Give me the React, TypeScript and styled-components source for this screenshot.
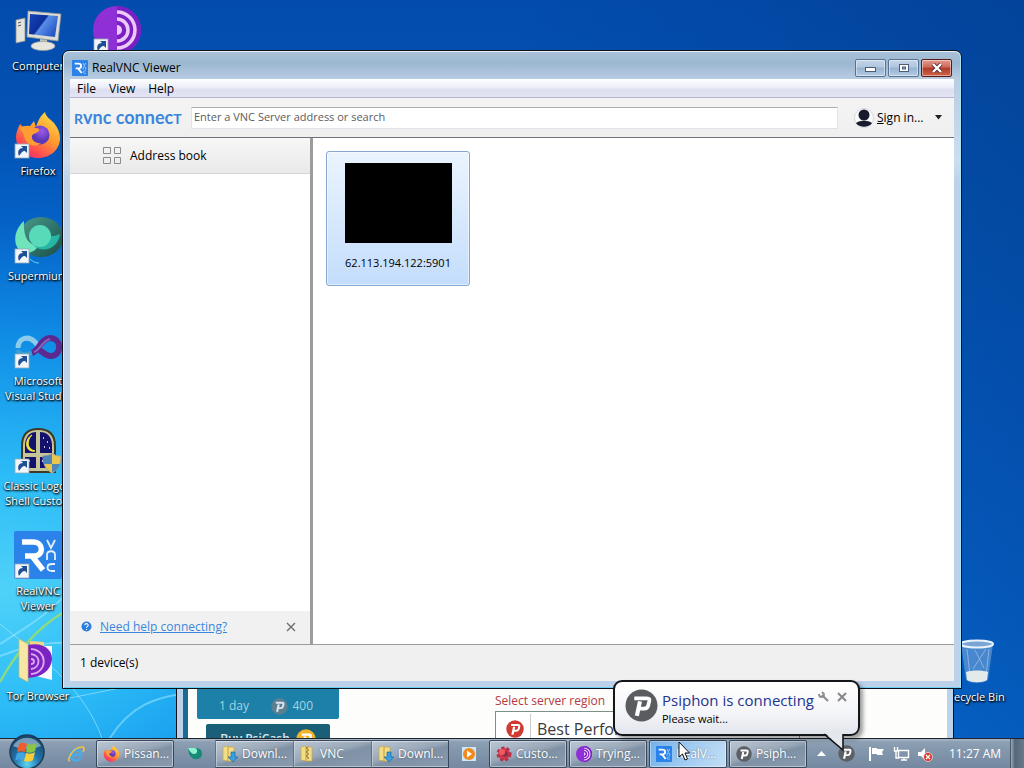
import React from 'react';
import styled, { createGlobalStyle } from 'styled-components';

const GlobalStyle = createGlobalStyle`
  * { box-sizing: border-box; }
  body { margin: 0; font-family: 'Open Sans', 'Noto Sans', sans-serif; font-size: 12px; line-height: 16px; color: #000; }
  button, input { font: inherit; color: inherit; margin: 0; }
  button { padding: 0; border: 0; background: none; text-align: left; }
  svg { display: block; flex: none; }
`;

const Screen = styled.div`
  display: flex;
  flex-direction: column;
  height: 100vh;
  overflow: hidden;
`;

const Desktop = styled.main`
  position: relative;
  flex: 1;
  min-height: 0;
  background:
    radial-gradient(ellipse 60% 62% at 0% 80%, #4fd2f8 0%, #2cbcf7 25%, rgba(18, 150, 236, 0.85) 55%, rgba(6, 110, 215, 0.5) 80%, rgba(4, 90, 200, 0) 100%),
    linear-gradient(90deg, rgba(4, 60, 150, 0) 50%, rgba(2, 50, 120, 0.35) 100%),
    linear-gradient(180deg, #034cad 0%, #0456b8 30%, #0560cc 60%, #0672e0 100%);
`;

const Wallpaper = styled.svg`
  position: absolute;
  left: 0;
  bottom: 0;
`;

const IconColumns = styled.div`
  position: absolute;
  inset: 0;
  display: flex;
  gap: 3px;
`;

const IconColumn = styled.div`
  display: flex;
  flex-direction: column;
  width: 76px;
`;

const DesktopIcon = styled.button`
  display: flex;
  flex-direction: column;
  align-items: center;
  gap: 4px;
  width: 76px;
  height: 105px;
  padding-top: 6px;
  color: #fff;
  font-size: 11px;
  line-height: 15px;
  text-align: center;
  white-space: pre;
  text-shadow: 1px 1px 2px #000, 0 1px 2px #000;
`;

const BinSpot = styled.div`
  position: absolute;
  right: 10px;
  bottom: 2px;
  width: 76px;
`;

const Glass = styled.section`
  position: absolute;
  display: flex;
  flex-direction: column;
  border: 1px solid #0b1016;
  background: #bcd2ea;
`;

const ViewerWindow = styled(Glass)`
  inset: 50px 62px 49px;
  padding: 0 7px 7px;
  border-radius: 7px 7px 0 0;
  background:
    linear-gradient(180deg, #aac2d9 0, #9bb7d1 12px, #b8cde2 28px, #cbdff2 110px, #bcd2ea 130px);
  box-shadow: inset 0 1px 0 #e4f0fa, inset 1px 0 0 #dceaf6, inset -1px 0 0 #a8e4f8, inset 0 -1px 0 #6fd0f2;
`;

const TitleBar = styled.header`
  display: flex;
  align-items: center;
  gap: 4px;
  height: 28px;
  padding: 5px 2px 0;
`;

const Title = styled.h1`
  flex: 1;
  margin: 0;
  font-size: 12px;
  font-weight: 400;
`;

const CaptionButtons = styled.div`
  display: flex;
  gap: 2px;
`;

const CaptionButton = styled.button<{ $close?: boolean }>`
  display: grid;
  place-items: center;
  width: 31px;
  height: 18px;
  border: 1px solid ${p => (p.$close ? '#5a1a18' : '#5a7290')};
  border-radius: 2px;
  background: ${p => (p.$close
    ? 'linear-gradient(#e09a8c 0, #cf6a58 45%, #b03a28 50%, #cf6448 100%)'
    : 'linear-gradient(#c3d5e8 0, #b0c6de 45%, #96b2d0 50%, #b4cce4 100%)')};
  box-shadow: inset 0 0 0 1px rgba(255, 255, 255, 0.45);
`;

const Client = styled.div`
  display: flex;
  flex: 1;
  flex-direction: column;
  min-height: 0;
  background: #fff;
`;

const MenuBar = styled.nav`
  display: flex;
  gap: 13px;
  height: 19px;
  padding: 2px 7px 0;
  border-bottom: 1px solid #b4b6cc;
  background: linear-gradient(#fff, #eceef8 45%, #dcdff0 60%, #e4e4f4);
`;

const Toolbar = styled.div`
  display: flex;
  align-items: center;
  height: 40px;
  padding: 0 11px 0 4px;
  border-bottom: 1px solid #70747a;
  background: linear-gradient(#f4f4f4, #efefef);
`;

const Wordmark = styled.div`
  width: 117px;
  color: #3a86dc;
  font-family: Lato, sans-serif;
  font-size: 18px;
  font-weight: 700;
  line-height: 24px;
  white-space: pre;
`;

const Cap = styled.span`
  font-size: 14px;
`;

const AddressInput = styled.input`
  flex: 1;
  min-width: 0;
  height: 22px;
  margin-right: 16px;
  padding: 0 2px 2px;
  border: 1px solid #e2e3ea;
  border-top-color: #abadb3;
  background: #fff;
  font-size: 11px;
  outline: 0;
  &::placeholder { color: #5c5c5c; opacity: 1; }
`;

const SignIn = styled.button`
  display: flex;
  align-items: center;
  width: 89px;
  gap: 3px;
`;

const SignInLabel = styled.span`
  flex: 1;
`;

const Panes = styled.div`
  display: flex;
  flex: 1;
  min-height: 0;
`;

const Sidebar = styled.aside`
  display: flex;
  flex-direction: column;
  justify-content: space-between;
  width: 243px;
  border-right: 3px solid #9c9c9c;
`;

const SideItem = styled.button`
  display: flex;
  align-items: center;
  gap: 8px;
  height: 36px;
  padding-left: 33px;
  border-bottom: 1px solid #d6d6d6;
  background: linear-gradient(#f7f7f7, #e9e9e9);
`;

const HelpBar = styled.div`
  display: flex;
  align-items: center;
  gap: 8px;
  height: 33px;
  padding: 0 14px 2px 11px;
  background: #f1f1f1;
`;

const HelpLink = styled.a`
  flex: 1;
  color: #3a86dc;
`;

const DeviceArea = styled.div`
  flex: 1;
  padding: 13px;
`;

const DeviceTile = styled.button`
  display: flex;
  flex-direction: column;
  align-items: center;
  gap: 12px;
  width: 144px;
  height: 135px;
  padding-top: 11px;
  border: 1px solid #84a8cf;
  border-radius: 3px;
  background: linear-gradient(#ebf4fe, #c4ddfc);
  box-shadow: inset 0 0 0 1px rgba(255, 255, 255, 0.5);
  font-size: 11px;
`;

const Thumb = styled.span`
  width: 107px;
  height: 80px;
  background: #000;
`;

const StatusBar = styled.footer`
  height: 37px;
  padding: 10px;
  border-top: 1px solid #9c9c9c;
  background: #f0f0f0;
`;

const PsiphonWindow = styled(Glass)`
  left: 176px;
  right: 70px;
  bottom: 0;
  height: 80px;
  padding: 0 6px;
  border-bottom: 0;
`;

const PsiphonBody = styled.div`
  display: flex;
  flex: 1;
  gap: 156px;
  min-height: 0;
  padding: 20px 9px 0;
  border-left: 5px solid #1a6b94;
  background: #fdfdfb;
  overflow: hidden;
`;

const CashPanel = styled.div`
  display: flex;
  flex: none;
  flex-direction: column;
  align-items: center;
  gap: 5px;
  width: 142px;
`;

const PriceButton = styled.button`
  display: flex;
  flex: none;
  align-items: center;
  justify-content: space-between;
  width: 100%;
  height: 40px;
  padding: 14px 26px 0 22px;
  border-radius: 2px;
  background: #1d80a8;
  color: #a3d3e4;
`;

const Coins = styled.span`
  display: flex;
  align-items: center;
  gap: 4px;
`;

const BuyButton = styled.button`
  display: flex;
  flex: none;
  align-items: center;
  justify-content: center;
  gap: 6px;
  width: 124px;
  height: 30px;
  border-radius: 2px;
  background: #1b5e78;
  color: #d6e8ee;
  font-weight: 600;
`;

const RegionPanel = styled.div`
  width: 305px;
  padding-top: 14px;
  color: #b23a44;
`;

const RegionButton = styled.button`
  display: flex;
  align-items: center;
  width: 100%;
  height: 36px;
  margin-top: 2px;
  padding-left: 10px;
  border: 1px solid #7d9088;
  background: #fff;
  color: #3c3c3c;
  font-size: 16px;
`;

const RegionName = styled.span`
  margin-left: 6px;
  padding-left: 6px;
  border-left: 1px solid #ccc;
  line-height: 30px;
`;

const Taskbar = styled.footer`
  position: relative;
  display: flex;
  align-items: center;
  height: 30px;
  border-top: 1px solid #1c242e;
  background: linear-gradient(#a9b8c8 0, #8c9fb3 3px, #8094aa 50%, #7489a1 100%);
  color: #fff;
`;

const StartButton = styled.button`
  width: 56px;
  padding-left: 8px;
  margin-top: -4px;
`;

const Pinned = styled.button<{ $w: number }>`
  display: grid;
  place-items: center;
  width: ${p => p.$w}px;
  height: 28px;
`;

const TaskGroup = styled.div<{ $gap: number }>`
  display: flex;
  gap: ${p => p.$gap}px;
`;

const TaskButton = styled.button<{ $active?: boolean }>`
  display: flex;
  align-items: center;
  gap: 4px;
  width: 78px;
  height: 28px;
  padding-left: 6px;
  border: 1px solid #38485a;
  border-radius: 2px;
  background: ${p => (p.$active
    ? 'linear-gradient(115deg, #74b2ea 0, #a4cdf2 55%, #c2def5 100%)'
    : 'linear-gradient(165deg, #bcc7d4 0, #98a7b8 45%, #7f91a5 55%, #8a9bae 100%)')};
  box-shadow: inset 0 0 0 1px rgba(255, 255, 255, 0.4);
  white-space: nowrap;
  text-shadow: 0 0 2px rgba(40, 60, 80, 0.6);
`;

const JoinedTask = styled(TaskButton)`
  border-width: 1px 0 1px 1px;
  border-left-color: rgba(56, 72, 90, 0.45);
  border-radius: 0;
  box-shadow: inset 0 1px 0 rgba(255, 255, 255, 0.45), inset 0 -1px 0 rgba(255, 255, 255, 0.4), inset 1px 0 0 rgba(255, 255, 255, 0.3);
  &:last-child { border-right-width: 1px; }
`;

const Tray = styled.div`
  display: flex;
  align-items: center;
  gap: 7px;
  margin-left: auto;
  height: 100%;
`;

const TrayOverflow = styled.div`
  display: flex;
  align-items: center;
  gap: 12px;
  margin-right: 6px;
`;

const Clock = styled.time`
  width: 70px;
  padding-left: 9px;
  white-space: nowrap;
`;

const ShowDesktop = styled.button`
  width: 14px;
  height: 29px;
  margin-left: -7px;
  border-left: 1px solid #4a5a6c;
  background: linear-gradient(90deg, #9aa9b8, #54667a 30%, #67798c);
`;

const Balloon = styled.aside`
  position: absolute;
  right: 164px;
  bottom: 32px;
  display: flex;
  align-items: flex-start;
  gap: 4px;
  width: 247px;
  height: 56px;
  padding: 7px 12px 0 10px;
  border: 2px solid #14161a;
  border-radius: 9px;
  background: linear-gradient(#fff, #f4f5f8 60%, #e2e5ec);
  box-shadow: 3px 3px 4px rgba(0, 0, 0, 0.4);
  color: #000;
`;

const BalloonText = styled.div`
  flex: 1;
  font-size: 11px;
  white-space: nowrap;
`;

const BalloonTitle = styled.h2`
  margin: 0;
  color: #24338f;
  font-size: 15px;
  font-weight: 400;
  line-height: 22px;
`;

const BalloonTools = styled.div`
  display: flex;
  gap: 8px;
  padding-top: 2px;
`;

const Tail = styled.svg`
  position: absolute;
  right: 12px;
  top: 51px;
`;

const Pointer = styled.svg`
  position: absolute;
  left: 678px;
  bottom: 7px;
`;

const ShortcutArrow = () => (
  <g>
    <rect x="1" y="33" width="14" height="14" fill="#f2f6fa" stroke="#9aa8b6" strokeWidth=".8" />
    <path d="M5 45c-2-5 0-8 4-8l-2-2h6v7l-2-2c-3 0-4 2-6 5z" fill="#1f4f94" />
  </g>
);

const PsiphonMark = ({ size, bg, fg = '#fff' }: { size: number; bg: string; fg?: string }) => (
  <svg width={size} height={size} viewBox="0 0 32 32">
    <circle cx="16" cy="16" r="15.5" fill={bg} />
    <path d="M9 9h12c3 0 3 1 2.500 3l-1 4c-.5 2-1.500 3-4 3h-5" fill="none" stroke={fg} strokeWidth="3.600" />
    <path d="M14.500 12l-3 14" fill="none" stroke={fg} strokeWidth="4" />
  </svg>
);

const VncMark = ({ size }: { size: number }) => (
  <svg width={size} height={size} viewBox="0 0 48 48">
    <rect width="48" height="48" rx="2" fill="#2b83ea" />
    <path d="M8 11h11c11 0 11 14 1 14h-9M18 25l11 14" fill="none" stroke="#fff" strokeWidth="5.500" />
    <path d="M33 9l4 8 4-8M33 29v-5c0-5 8-5 8 0v5M41 33h-3c-6 0-6 7 0 7h3" fill="none" stroke="#e2efff" strokeWidth="1.800" />
  </svg>
);

const FirefoxShape = () => (
  <g>
    <defs>
      <linearGradient id="fx" x1=".85" y1="0" x2=".2" y2="1">
        <stop offset="0" stopColor="#ffe04a" /><stop offset=".45" stopColor="#ff9a2e" /><stop offset=".8" stopColor="#ff4a52" /><stop offset="1" stopColor="#e8267a" />
      </linearGradient>
      <radialGradient id="fxg" cx=".6" cy=".3"><stop offset="0" stopColor="#a05ae8" /><stop offset="1" stopColor="#5a38b8" /></radialGradient>
    </defs>
    <path d="M6 13l4 4c2-2 4-2 6-2l4-5 2 6c2-7 5-12 9-15 1 5 5 7 9 11 4 5 6 10 6 15 0 11-9 20-22 20S2 37 2 26c0-5 2-9 4-13z" fill="url(#fx)" />
    <circle cx="26" cy="24" r="9.500" fill="url(#fxg)" />
    <path d="M5 17c5-3 13-3 16 0 3 0 5 1 4 3-3 3-6 2-7 5-1 4 4 8 9 7-8 6-16 0-17-7-1-4-3-6-5-8z" fill="#ff9d35" />
  </g>
);

const TorShape = () => (
  <g>
    <circle cx="24" cy="24" r="24" fill="#8f2fd6" />
    <path d="M24 0a24 24 0 0 1 0 48z" fill="#7a1fc4" />
    <path d="M24 6a18 18 0 0 1 0 36M24 13a11 11 0 0 1 0 22" fill="none" stroke="#ecc9fb" strokeWidth="3.500" />
    <path d="M24 19a5 5 0 0 1 0 10z" fill="#ecc9fb" />
  </g>
);

const SupermiumShape = () => (
  <g>
    <defs><linearGradient id="sm" x2="1" y2="1"><stop offset="0" stopColor="#4d9a88" /><stop offset=".6" stopColor="#2a6e66" /><stop offset="1" stopColor="#1c4a3e" /></linearGradient></defs>
    <ellipse cx="27" cy="21" rx="22" ry="20" fill="url(#sm)" />
    <path d="M10 5C-1 14-2 32 9 36c9 2 13-2 15-6-10-1-15-9-14-25z" fill="#6fe3ba" />
    <path d="M20 30c10 8 24 2 26-12-6 3-14 3-18-2z" fill="#27b5a5" />
    <circle cx="26" cy="20" r="11" fill="#58d9b8" />
    <path d="M16 43c3 3 6 4 9 4" stroke="#5ad9ee" fill="none" />
  </g>
);

const FolderIcon = ({ zip }: { zip?: boolean }) => (
  <svg width="16" height="18" viewBox="0 0 16 18">
    <path d="M1 2l5-1v15l-5-1zM6 2h6v14H6z" fill="#f2dc84" stroke="#c8a640" strokeWidth=".7" />
    {zip
      ? <path d="M6 3h2M7 5h2M6 7h2M7 9h2M6 11h2M7 13h2" stroke="#6a5530" />
      : <path d="M9 7h4v5h3l-5 5-5-5h3z" fill="#3a9fe0" stroke="#1a6aa8" strokeWidth=".7" />}
  </svg>
);

const ComputerIcon = () => (
  <svg width="48" height="48" viewBox="0 0 48 48">
    <defs><linearGradient id="scr" x2="1" y2=".6"><stop offset="0" stopColor="#1644b8" /><stop offset=".5" stopColor="#0b2f9c" /><stop offset=".55" stopColor="#5a8ee8" /><stop offset="1" stopColor="#2458c8" /></linearGradient></defs>
    <path d="M2 14l9-2v23l-9 2z" fill="#e4e4dc" stroke="#8c9090" strokeWidth=".8" /><path d="M4 17l3-1M4 20l3-1" stroke="#555" />
    <path d="M14 5l33 3-3 27-31-4z" fill="#dcdcd2" stroke="#92979a" strokeWidth=".8" />
    <path d="M16 8l28 2-3 21-26-3z" fill="url(#scr)" />
    <path d="M26 33l7 1v5h-7z" fill="#c0c2bc" /><ellipse cx="29" cy="40" rx="12" ry="4.500" fill="#e6e6de" stroke="#9a9c98" strokeWidth=".7" />
  </svg>
);

const VisualStudioIcon = () => (
  <svg width="48" height="48" viewBox="0 0 48 48">
    <path d="M4 27c0-10 10-13 17-6l6 8" fill="none" stroke="#8ccbea" strokeWidth="5" />
    <path d="M3 29c3 5 12 6 18 0" fill="none" stroke="#3c9ed2" strokeWidth="4" />
    <path d="M18 32c7-2 9-15 18-15 12 0 12 18 1 18-6 0-9-5-14-8" fill="none" stroke="#5b2a91" strokeWidth="6" />
    <path d="M20 31c6-2 8-11 16-13" fill="none" stroke="#8d62bb" strokeWidth="2" />
    <ShortcutArrow />
  </svg>
);

const ClassicIcon = () => (
  <svg width="48" height="48" viewBox="0 0 48 48">
    <path d="M8 46V20C8 8 14 3 24 3s17 5 17 17v26z" fill="#c8c49a" stroke="#3e3b22" strokeWidth="2" />
    <path d="M11 27V18C12 10 16 6 22 6v21zM26 6c7 0 11 4 12 12v9H26zM11 31h11v11H11zM26 31h12v11H26z" fill="#12126c" />
    <path d="M18 9c-6 6-5 14 3 16-10 2-11-12-3-16z" fill="#f4e834" stroke="#f4e834" />
    <path d="M29 12h1M33 16h1M30 21h1M35 22h1M28 35h1M15 35h1" stroke="#fff" strokeWidth="1.500" />
    <path d="M29 30c4 0 7-1 9-3 2 2 5 3 9 3 0 9-3 14-9 17-6-3-9-8-9-17z" fill="#eac64e" stroke="#98a2aa" />
    <path d="M38 28v10h-8c-1-2-1-5-1-8 4 0 7-1 9-2zM38 38h8c-1 4-4 7-8 8z" fill="#4f86b8" />
    <ShortcutArrow />
  </svg>
);

const TorFolderIcon = () => (
  <svg width="48" height="48" viewBox="0 0 48 48">
    <path d="M16 5l14 1v20H16z" fill="#eed687" /><path d="M18 10h20v34l-20-5z" fill="#faf8fa" />
    <path d="M14 9c32-6 32 32 0 33z" fill="#7c22c2" />
    <path d="M17 13c17 1 17 24 0 25M17 18c10 1 10 14 0 15M17 23c4 0 4 5 0 5" fill="none" stroke="#dba8f2" strokeWidth="1.800" />
    <path d="M5 3l9 5v38L5 41z" fill="#f7e6a4" stroke="#d2b45c" strokeWidth=".7" />
  </svg>
);

const BinIcon = () => (
  <svg width="48" height="48" viewBox="0 0 48 48">
    <path d="M9 7h32l-5 36c-4 4-18 4-22 0z" fill="#c6dcf2" opacity=".35" />
    <path d="M14 35c6-2 16-2 22 0l-1 8c-5 3-15 3-20 0z" fill="#e4e9ea" />
    <path d="M15 12l3 26M23 13l9 18M34 12l-13 20M37 12l-3 27" stroke="#eef6ff" opacity=".4" />
    <ellipse cx="25" cy="7" rx="16" ry="3.500" fill="#7aa6d4" stroke="#e8f2fa" strokeWidth="2" />
  </svg>
);

const StartOrb = () => (
  <svg width="38" height="36" viewBox="0 0 38 36">
    <defs><radialGradient id="orb" cy=".85" r=".8"><stop offset="0" stopColor="#5fd6f6" /><stop offset=".45" stopColor="#2474a8" /><stop offset="1" stopColor="#16456e" /></radialGradient></defs>
    <circle cx="19" cy="18" r="17" fill="url(#orb)" stroke="#1c3d5a" strokeWidth="1.500" />
    <path d="M5 12c6-11 22-11 28 0-8 4-20 4-28 0z" fill="#d5e8f2" opacity=".5" />
    <path d="M11 10c3-2 5-1 8 0l-2 8c-3-1-5-1-8 0z" fill="#ee5d2c" /><path d="M20 10c3 1 6 1 9-1l-2 8c-3 2-6 2-9 1z" fill="#8cc63e" />
    <path d="M9 19c3-1 5-1 8 0l-2 8c-3-2-5-2-8 0z" fill="#41a5e4" /><path d="M18 19c3 1 6 1 9-1l-2 8c-3 2-6 2-9 1z" fill="#fbce35" />
  </svg>
);

const IeIcon = () => (
  <svg width="20" height="20" viewBox="0 0 20 20">
    <path d="M5 11h10c0-7-10-7-10 0 0 6 7 7 10 3" fill="none" stroke="#4ca9e8" strokeWidth="2.800" />
    <path d="M4 17C0 17 7 2 17 3c2 1 1 3 0 5" fill="none" stroke="#f2c440" strokeWidth="1.500" />
  </svg>
);

const App = () => (
  <Screen>
    <GlobalStyle />
    <Desktop>
      <Wallpaper width="190" height="200" viewBox="0 0 190 200">
        <path d="M0 106C35 84 55 72 80 40M0 118c60-25 120-16 190 30M110 200c20-32 46-42 80-45" fill="none" stroke="#a6ecff" strokeWidth="2" opacity=".5" />
        <path d="M0 86c50 40 84 66 102 114M70 160l120-24" fill="none" stroke="#c8f5ff" strokeWidth="1" opacity=".5" />
        <path d="M0 144C14 118 36 90 64 74" fill="none" stroke="#9ade6a" strokeWidth="2.500" opacity=".85" />
      </Wallpaper>
      <IconColumns>
        <IconColumn>
          <DesktopIcon><ComputerIcon />Computer</DesktopIcon>
          <DesktopIcon><svg width="48" height="48" viewBox="0 0 48 48"><FirefoxShape /><ShortcutArrow /></svg>Firefox</DesktopIcon>
          <DesktopIcon><svg width="48" height="48" viewBox="0 0 48 48"><SupermiumShape /><ShortcutArrow /></svg>Supermium</DesktopIcon>
          <DesktopIcon><VisualStudioIcon />{'Microsoft\nVisual Studio'}</DesktopIcon>
          <DesktopIcon><ClassicIcon />{'Classic Logon\nShell Custo...'}</DesktopIcon>
          <DesktopIcon><svg width="48" height="48" viewBox="0 0 48 48"><VncMark size={48} /><ShortcutArrow /></svg>{'RealVNC\nViewer'}</DesktopIcon>
          <DesktopIcon><TorFolderIcon />Tor Browser</DesktopIcon>
        </IconColumn>
        <IconColumn>
          <DesktopIcon aria-label="Tor"><svg width="48" height="48" viewBox="0 0 48 48"><TorShape /><ShortcutArrow /></svg></DesktopIcon>
        </IconColumn>
      </IconColumns>
      <BinSpot><DesktopIcon><BinIcon />Recycle Bin</DesktopIcon></BinSpot>

      <PsiphonWindow>
        <PsiphonBody>
          <CashPanel>
            <PriceButton>1 day<Coins><PsiphonMark size={17} bg="#5d7f92" fg="#dbe8ee" />400</Coins></PriceButton>
            <BuyButton>Buy PsiCash<PsiphonMark size={20} bg="#f0b429" /></BuyButton>
          </CashPanel>
          <RegionPanel>
            Select server region
            <RegionButton><PsiphonMark size={18} bg="#cf3b30" /><RegionName>Best Performance</RegionName></RegionButton>
          </RegionPanel>
        </PsiphonBody>
      </PsiphonWindow>

      <ViewerWindow>
        <TitleBar>
          <VncMark size={16} />
          <Title>RealVNC Viewer</Title>
          <CaptionButtons>
            <CaptionButton aria-label="Minimize"><svg width="13" height="10"><rect x="1.500" y="4.500" width="10" height="4" fill="#fff" stroke="#4a5c78" /></svg></CaptionButton>
            <CaptionButton aria-label="Maximize"><svg width="12" height="10"><rect x="1.500" y="1.500" width="9" height="7" fill="#fff" stroke="#4a5c78" /><rect x="4.500" y="4" width="3" height="2" fill="#9ab4d0" stroke="#4a5c78" /></svg></CaptionButton>
            <CaptionButton $close aria-label="Close"><svg width="14" height="10"><path d="M3 1l8 8M11 1l-8 8" stroke="#50302e" strokeWidth="4" /><path d="M3 1l8 8M11 1l-8 8" stroke="#fff" strokeWidth="2.400" /></svg></CaptionButton>
          </CaptionButtons>
        </TitleBar>
        <Client>
          <MenuBar><button>File</button><button>View</button><button>Help</button></MenuBar>
          <Toolbar>
            <Wordmark><Cap>R</Cap>vnc connec<Cap>T</Cap></Wordmark>
            <AddressInput aria-label="Address" placeholder="Enter a VNC Server address or search" />
            <SignIn>
              <svg width="20" height="20"><circle cx="10" cy="10" r="9.500" fill="#fafafa" stroke="#d8d8dc" /><circle cx="10" cy="7" r="5.500" fill="#181a2e" /><path d="M2 15c4-3 12-3 16 0-3 5-13 5-16 0z" fill="#181a2e" /></svg>
              <SignInLabel><u>S</u>ign in...</SignInLabel>
              <svg width="9" height="5"><path d="M1 0h7L4.500 4.500z" fill="#222" /></svg>
            </SignIn>
          </Toolbar>
          <Panes>
            <Sidebar>
              <SideItem>
                <svg width="19" height="18" fill="none" stroke="#8a8a8a"><path d="M.5.5h7v6h-7zM11.500.5h6v6h-6zM.5 10.500h7v6h-7zM11.500 10.500h6v6h-6z" /></svg>
                Address book
              </SideItem>
              <HelpBar>
                <svg width="11" height="11"><circle cx="5.500" cy="5.500" r="5" fill="#2b7de0" /><path d="M3.800 4.300c0-2.200 3.400-2.200 3.400 0 0 1-1.700 1.200-1.700 2.500M5.500 8v1" fill="none" stroke="#fff" strokeWidth="1.100" /></svg>
                <HelpLink href="#help">Need help connecting?</HelpLink>
                <button aria-label="Dismiss"><svg width="10" height="10"><path d="M1 1l8 8M9 1l-8 8" stroke="#6a6a6a" strokeWidth="1.300" /></svg></button>
              </HelpBar>
            </Sidebar>
            <DeviceArea><DeviceTile><Thumb />62.113.194.122:5901</DeviceTile></DeviceArea>
          </Panes>
          <StatusBar>1 device(s)</StatusBar>
        </Client>
      </ViewerWindow>
    </Desktop>

    <Taskbar>
      <StartButton aria-label="Start"><StartOrb /></StartButton>
      <Pinned $w={40} aria-label="Internet Explorer"><IeIcon /></Pinned>
      <TaskButton><svg width="17" height="17" viewBox="0 0 48 48"><FirefoxShape /></svg>Pissan...</TaskButton>
      <Pinned $w={41} aria-label="Supermium"><svg width="16" height="14" viewBox="0 0 16 14"><path d="M1 1h8c8 0 8 11 1 11-3 1-6-1-8-5" fill="#168a76" /><path d="M1 1h7c3 1 3 6-1 6-2 0-4-2-6-6z" fill="#8ff0cf" /></svg></Pinned>
      <TaskGroup $gap={0}>
        <JoinedTask><FolderIcon />Downl...</JoinedTask>
        <JoinedTask><FolderIcon zip />VNC</JoinedTask>
        <JoinedTask><FolderIcon />Downl...</JoinedTask>
      </TaskGroup>
      <Pinned $w={40} aria-label="Media Player"><svg width="14" height="14"><rect width="14" height="14" fill="#cfe6f4" /><circle cx="7" cy="7" r="6" fill="#f08a1c" /><path d="M5 3.500v7l5-3.500z" fill="#fff" /></svg></Pinned>
      <TaskGroup $gap={2}>
        <TaskButton><svg width="16" height="16" viewBox="0 0 16 16"><circle cx="8" cy="8" r="6" fill="#d83a4c" stroke="#b43248" strokeWidth="3" strokeDasharray="3 2" /><circle cx="9" cy="8" r="3" fill="#8e3048" /><circle cx="6" cy="6" r="3" fill="#f05a64" /></svg>Custo...</TaskButton>
        <TaskButton><svg width="16" height="16" viewBox="0 0 48 48"><TorShape /></svg>Trying...</TaskButton>
        <TaskButton $active><VncMark size={16} />RealV...</TaskButton>
        <TaskButton><PsiphonMark size={16} bg="#5c5f64" />Psiph...</TaskButton>
      </TaskGroup>
      <Tray>
        <TrayOverflow>
          <svg width="9" height="5"><path d="M0 5l4.500-5L9 5z" fill="#fff" /></svg>
          <PsiphonMark size={17} bg="#5c5f64" />
        </TrayOverflow>
        <svg width="18" height="16"><path d="M2 1v14" stroke="#fff" strokeWidth="2" /><path d="M4 2h5v1h7l-2 3 1 3H9V8H4z" fill="#fff" /></svg>
        <svg width="17" height="16"><path d="M5.500 4.500h10v7h-10zM8 14h6M11 12v2M1.500 1v4h3V1M3 5v7h3" fill="none" stroke="#fff" strokeWidth="1.400" /></svg>
        <svg width="16" height="16"><path d="M1 6h3l4-4v12l-4-4H1z" fill="#fff" /><circle cx="11" cy="11" r="4.500" fill="#d83a2e" stroke="#fff" strokeWidth=".6" /><path d="M9 9l4 4M13 9l-4 4" stroke="#fff" strokeWidth="1.300" /></svg>
        <Clock>11:27 AM</Clock>
        <ShowDesktop aria-label="Show desktop" />
      </Tray>
      <Balloon>
        <PsiphonMark size={33} bg="#5a5c60" />
        <BalloonText>
          <BalloonTitle>Psiphon is connecting</BalloonTitle>
          Please wait...
        </BalloonText>
        <BalloonTools>
          <button aria-label="Options"><svg width="11" height="11"><path d="M4 4l6 6" stroke="#8c8c8c" strokeWidth="2.200" /><path d="M1 3c0 4 5 4 5 0L4 1" fill="none" stroke="#8c8c8c" strokeWidth="1.800" /></svg></button>
          <button aria-label="Close"><svg width="10" height="10"><path d="M1 1l8 8M9 1l-8 8" stroke="#888" strokeWidth="2" /></svg></button>
        </BalloonTools>
        <Tail width="22" height="20"><path d="M1 0l18 17V0z" fill="#e4e7ee" /><path d="M0 1l19 16V1" fill="none" stroke="#14161a" strokeWidth="1.600" /></Tail>
      </Balloon>
      <Pointer width="13" height="20"><path d="M1 1v15l3.500-3 2.500 6 2.500-1-2.500-6h4.500z" fill="#fff" stroke="#111" /></Pointer>
    </Taskbar>
  </Screen>
);

export default App;
